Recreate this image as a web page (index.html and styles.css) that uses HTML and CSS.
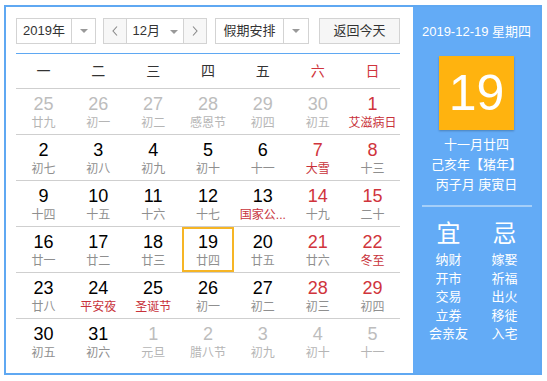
FILE: index.html
```html
<!DOCTYPE html>
<html lang="zh-CN">
<head>
    <meta charset="UTF-8">
    <title>万年历</title>
    <link rel="stylesheet" href="styles.css">
</head>
<body>
    <div class="calendar">
        <div class="main">
            <div class="toolbar">
                <div class="select year">
                    <span class="select-text">2019年</span>
                    <span class="select-arrow"><i class="tri"></i></span>
                </div>
                <div class="select month">
                    <span class="nav-btn">
                        <svg width="6" height="10" viewBox="0 0 6 10"><polyline points="5,0.5 1,5 5,9.5" fill="none" stroke="#888" stroke-width="1.1"/></svg>
                    </span>
                    <span class="month-text">12月 <i class="tri"></i></span>
                    <span class="nav-btn next">
                        <svg width="6" height="10" viewBox="0 0 6 10"><polyline points="1,0.5 5,5 1,9.5" fill="none" stroke="#888" stroke-width="1.1"/></svg>
                    </span>
                </div>
                <div class="select holiday">
                    <span class="select-text">假期安排</span>
                    <span class="select-arrow"><i class="tri"></i></span>
                </div>
                <div class="today-btn">返回今天</div>
            </div>

            <div class="week">
                <span>一</span><span>二</span><span>三</span><span>四</span><span>五</span>
                <span class="red">六</span><span class="red">日</span>
            </div>

            <div class="days">
                <div class="day other"><div class="num">25</div><div class="lunar">廿九</div></div>
                <div class="day other"><div class="num">26</div><div class="lunar">初一</div></div>
                <div class="day other"><div class="num">27</div><div class="lunar">初二</div></div>
                <div class="day other"><div class="num">28</div><div class="lunar">感恩节</div></div>
                <div class="day other"><div class="num">29</div><div class="lunar">初四</div></div>
                <div class="day other"><div class="num">30</div><div class="lunar">初五</div></div>
                <div class="day weekend fest"><div class="num">1</div><div class="lunar">艾滋病日</div></div>

                <div class="day"><div class="num">2</div><div class="lunar">初七</div></div>
                <div class="day"><div class="num">3</div><div class="lunar">初八</div></div>
                <div class="day"><div class="num">4</div><div class="lunar">初九</div></div>
                <div class="day"><div class="num">5</div><div class="lunar">初十</div></div>
                <div class="day"><div class="num">6</div><div class="lunar">十一</div></div>
                <div class="day weekend fest"><div class="num">7</div><div class="lunar">大雪</div></div>
                <div class="day weekend"><div class="num">8</div><div class="lunar">十三</div></div>

                <div class="day"><div class="num">9</div><div class="lunar">十四</div></div>
                <div class="day"><div class="num">10</div><div class="lunar">十五</div></div>
                <div class="day"><div class="num">11</div><div class="lunar">十六</div></div>
                <div class="day"><div class="num">12</div><div class="lunar">十七</div></div>
                <div class="day fest"><div class="num">13</div><div class="lunar">国家公...</div></div>
                <div class="day weekend"><div class="num">14</div><div class="lunar">十九</div></div>
                <div class="day weekend"><div class="num">15</div><div class="lunar">二十</div></div>

                <div class="day"><div class="num">16</div><div class="lunar">廿一</div></div>
                <div class="day"><div class="num">17</div><div class="lunar">廿二</div></div>
                <div class="day"><div class="num">18</div><div class="lunar">廿三</div></div>
                <div class="day today"><div class="num">19</div><div class="lunar">廿四</div></div>
                <div class="day"><div class="num">20</div><div class="lunar">廿五</div></div>
                <div class="day weekend"><div class="num">21</div><div class="lunar">廿六</div></div>
                <div class="day weekend fest"><div class="num">22</div><div class="lunar">冬至</div></div>

                <div class="day"><div class="num">23</div><div class="lunar">廿八</div></div>
                <div class="day fest"><div class="num">24</div><div class="lunar">平安夜</div></div>
                <div class="day fest"><div class="num">25</div><div class="lunar">圣诞节</div></div>
                <div class="day"><div class="num">26</div><div class="lunar">初一</div></div>
                <div class="day"><div class="num">27</div><div class="lunar">初二</div></div>
                <div class="day weekend"><div class="num">28</div><div class="lunar">初三</div></div>
                <div class="day weekend"><div class="num">29</div><div class="lunar">初四</div></div>

                <div class="day"><div class="num">30</div><div class="lunar">初五</div></div>
                <div class="day"><div class="num">31</div><div class="lunar">初六</div></div>
                <div class="day other"><div class="num">1</div><div class="lunar">元旦</div></div>
                <div class="day other"><div class="num">2</div><div class="lunar">腊八节</div></div>
                <div class="day other"><div class="num">3</div><div class="lunar">初九</div></div>
                <div class="day other"><div class="num">4</div><div class="lunar">初十</div></div>
                <div class="day other"><div class="num">5</div><div class="lunar">十一</div></div>
            </div>
        </div>

        <div class="side">
            <div class="side-date">2019-12-19 星期四</div>
            <div class="big-day">19</div>
            <div class="lunar-info">
                <div>十一月廿四</div>
                <div>己亥年【猪年】</div>
                <div>丙子月 庚寅日</div>
            </div>
            <div class="divider"></div>
            <div class="yiji">
                <div class="yiji-col">
                    <div class="yiji-title">宜</div>
                    <ul>
                        <li>纳财</li>
                        <li>开市</li>
                        <li>交易</li>
                        <li>立券</li>
                        <li>会亲友</li>
                    </ul>
                </div>
                <div class="yiji-col">
                    <div class="yiji-title">忌</div>
                    <ul>
                        <li>嫁娶</li>
                        <li>祈福</li>
                        <li>出火</li>
                        <li>移徙</li>
                        <li>入宅</li>
                    </ul>
                </div>
            </div>
        </div>
    </div>
</body>
</html>
```

FILE: styles.css
```css
body {
    margin: 0;
    background: #fff;
    font-family: "Liberation Sans", "Noto Sans CJK SC", sans-serif;
    color: #333;
}
.calendar {
    display: flex;
    width: 538px;
    height: 370px;
    margin: 5px 0 0 4px;
    border: 2px solid #5fa8f2;
    box-sizing: border-box;
}
.main {
    width: 407px;
    padding: 11px 13px 0 10px;
    box-sizing: border-box;
}

/* 顶部工具栏 */
.toolbar {
    display: flex;
    height: 26px;
    padding-bottom: 9px;
    border-bottom: 1px solid #5fa8f2;
    font-size: 13px;
}
.select {
    display: flex;
    height: 26px;
    border: 1px solid #d3d3d3;
    box-sizing: border-box;
    background: #fff;
}
.select-text {
    flex: 1;
    text-align: center;
    line-height: 24px;
}
.select-arrow {
    display: flex;
    justify-content: center;
    align-items: center;
    width: 23px;
    border-left: 1px solid #d3d3d3;
}
.tri {
    display: inline-block;
    width: 0;
    height: 0;
    border-left: 4px solid transparent;
    border-right: 4px solid transparent;
    border-top: 4px solid #999;
    vertical-align: middle;
}
.year { width: 80px; }
.month {
    width: 104px;
    margin-left: 7px;
}
.nav-btn {
    display: flex;
    justify-content: center;
    align-items: center;
    width: 22px;
    background: #f7f7f7;
    border-right: 1px solid #d3d3d3;
}
.nav-btn.next {
    border-right: 0;
    border-left: 1px solid #d3d3d3;
}
.month-text {
    flex: 1;
    text-align: center;
    line-height: 24px;
}
.month-text .tri { margin-left: 6px; }
.holiday {
    width: 94px;
    margin-left: 8px;
}
.holiday .select-arrow { width: 24px; }
.today-btn {
    width: 81px;
    height: 26px;
    margin-left: 10px;
    border: 1px solid #d3d3d3;
    box-sizing: border-box;
    background: #f6f6f6;
    text-align: center;
    line-height: 24px;
}

/* 星期表头 */
.week {
    display: grid;
    grid-template-columns: repeat(7, 1fr);
    height: 34px;
    line-height: 34px;
    text-align: center;
    font-size: 14px;
    color: #333;
}
.week .red { color: #d0343c; }

/* 日期格子 */
.days {
    display: grid;
    grid-template-columns: repeat(7, 1fr);
}
.day {
    position: relative;
    height: 46px;
    padding-top: 5px;
    border-top: 1px solid #cfcfcf;
    box-sizing: border-box;
    text-align: center;
}
.num {
    font-size: 18px;
    line-height: 20px;
    color: #000;
}
.lunar {
    font-size: 12px;
    line-height: 18px;
    color: #8f8f8f;
    white-space: nowrap;
}
.day.weekend .num { color: #d0343c; }
.day.fest .lunar { color: #c8323a; }
.day.other .num { color: #bdbdbd; }
.day.other .lunar { color: #b5b5b5; }
.day.today::after {
    content: "";
    position: absolute;
    top: 0;
    bottom: 0;
    left: 1px;
    right: 1px;
    border: 2px solid #f6b525;
}

/* 右侧信息栏 */
.side {
    flex: 1;
    background: #63abf6;
    color: #fff;
    text-align: center;
    padding-top: 15px;
}
.side-date {
    font-size: 13px;
    line-height: 20px;
}
.big-day {
    width: 75px;
    height: 74px;
    margin: 14px auto 0;
    background: #ffb30f;
    font-size: 50px;
    line-height: 74px;
    box-shadow: 0 1px 2px rgba(0, 0, 0, 0.25);
}
.lunar-info {
    margin-top: 5px;
    font-size: 13px;
    line-height: 20px;
}
.divider {
    width: 110px;
    height: 2px;
    margin: 10px auto 0;
    background: #a5cff9;
}
.yiji {
    display: flex;
    justify-content: center;
    margin-top: 12px;
}
.yiji-col { width: 56px; }
.yiji-title {
    font-size: 24px;
    line-height: 30px;
}
.yiji-col ul {
    list-style: none;
    margin: 2px 0 0;
    padding: 0;
    font-size: 13px;
    line-height: 18.5px;
}
```
